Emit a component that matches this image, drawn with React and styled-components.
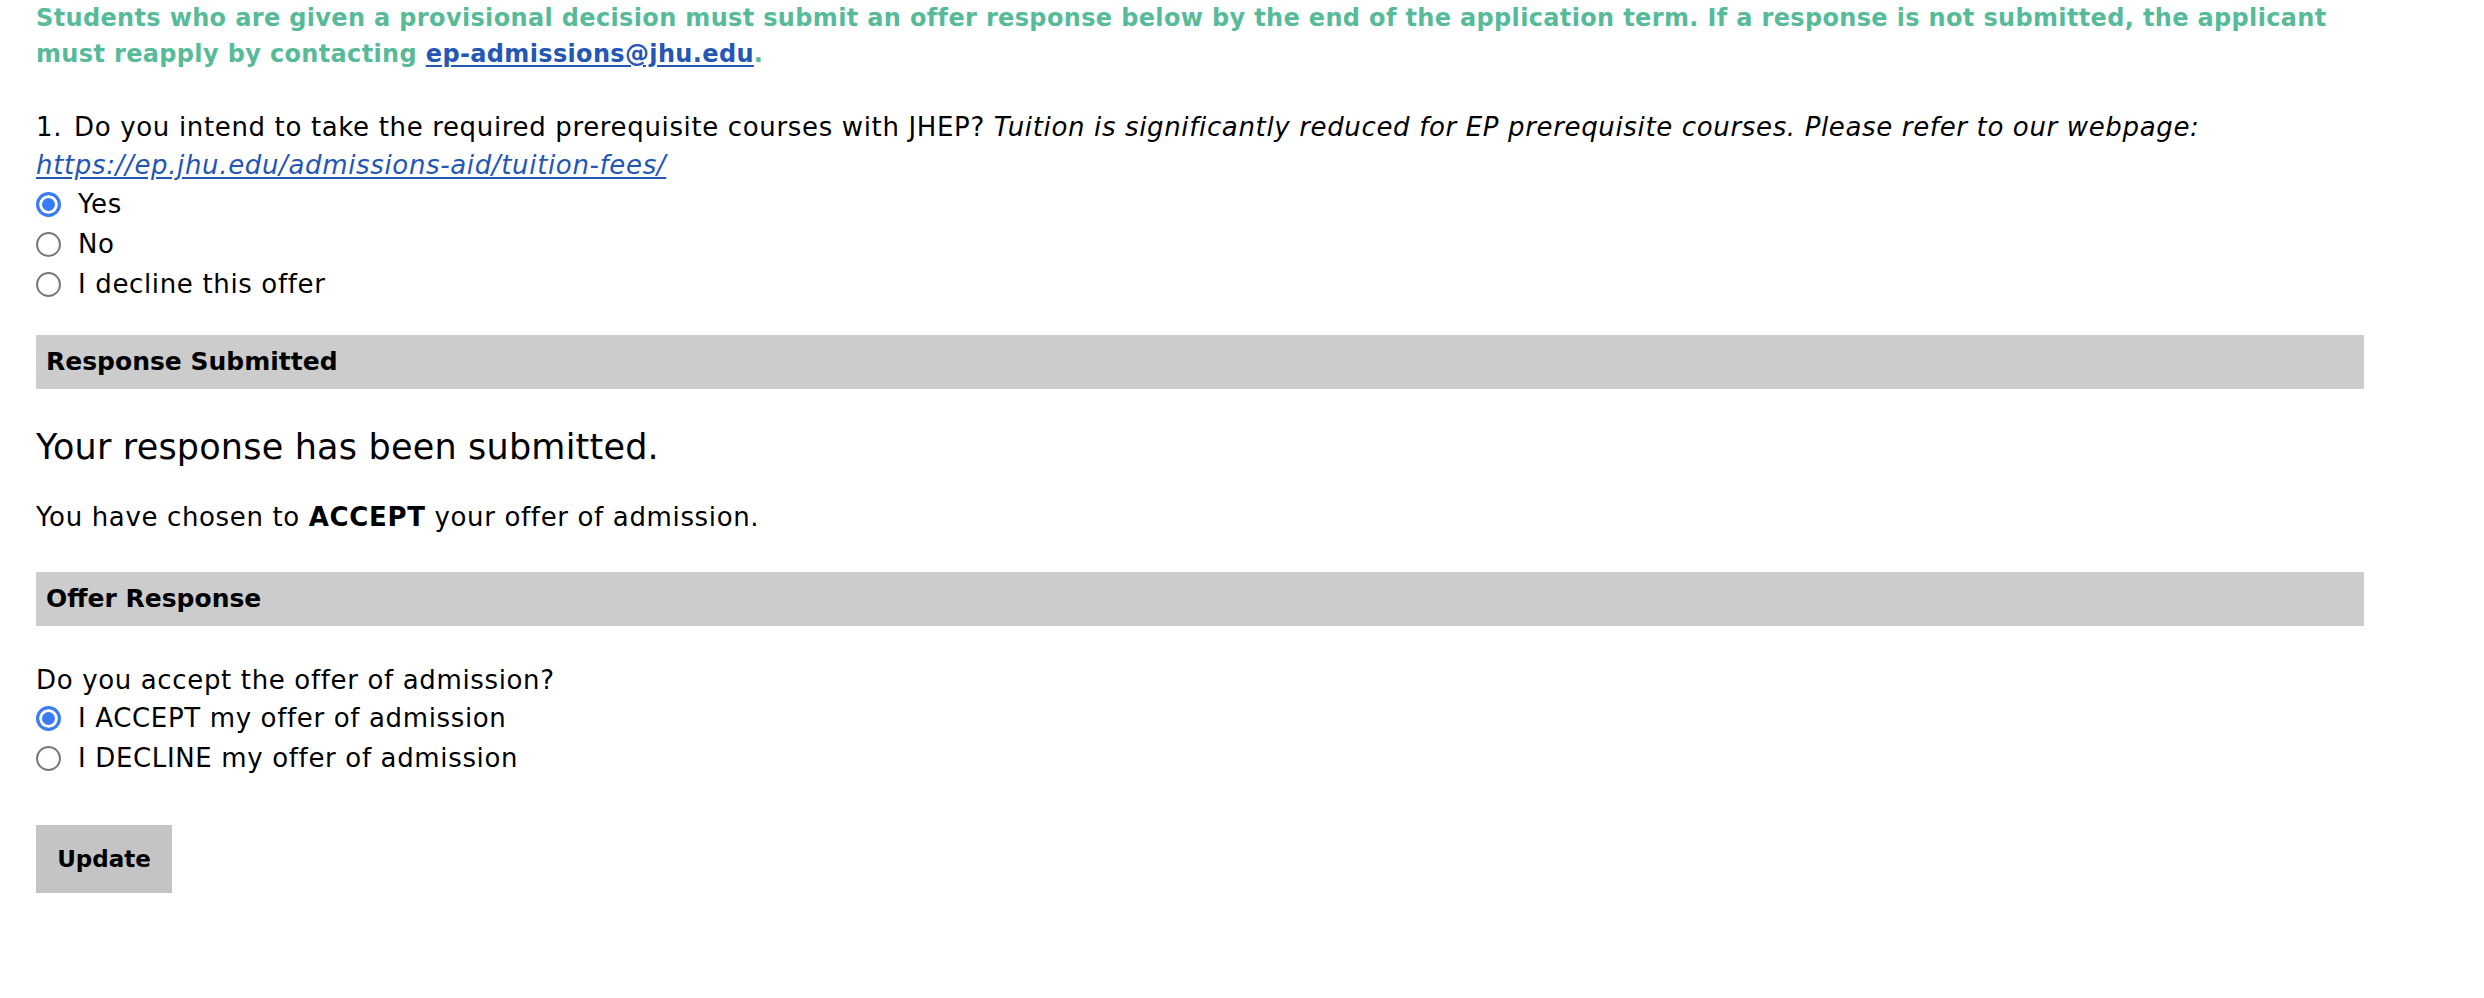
import React from "react";
import styled, { createGlobalStyle } from "styled-components";

const GlobalStyle = createGlobalStyle`
  html, body {
    margin: 0;
    padding: 0;
    background: #ffffff;
  }
  body {
    font-family: "DejaVu Sans", Inter, sans-serif;
    color: #000000;
  }
`;

const Page = styled.main`
  width: 2328px;
  padding: 0 0 0 36px;
  font-size: 26px;
  line-height: 36px;
  letter-spacing: 0.65px;
`;

const Notice = styled.p`
  margin: 0;
  color: #57bb99;
  font-weight: 700;
  font-size: 24px;
  line-height: 36px;
  letter-spacing: 0.35px;
`;

const Link = styled.a`
  color: #2456b4;
  text-decoration: underline;
  text-underline-offset: 3px;
  white-space: nowrap;
`;

const Question = styled.p`
  margin: 36px 0 0;
  font-size: 26px;
  line-height: 38px;
`;

const Num = styled.span`
  margin-right: 12px;
`;

const RadioGroup = styled.div`
  display: flex;
  flex-direction: column;
`;

const RadioRow = styled.label`
  display: flex;
  align-items: center;
  gap: 17px;
  height: 40px;
  font-size: 26px;
`;

const Radio = styled.input.attrs({ type: "radio" })`
  appearance: none;
  -webkit-appearance: none;
  margin: 0;
  width: 25px;
  height: 25px;
  border-radius: 50%;
  box-sizing: border-box;
  border: 2px solid #7a7a7a;
  background: #ffffff;
  flex: none;
  &:checked {
    border: 3px solid #3b7cf5;
    background: #3b7cf5;
    box-shadow: inset 0 0 0 3px #ffffff;
  }
`;

const SectionBar = styled.h2`
  margin: ${(p) => p.$top}px 0 0;
  height: 54px;
  box-sizing: border-box;
  background: #cccccc;
  padding: 0 10px;
  display: flex;
  align-items: center;
  font-size: 25px;
  font-weight: 700;
  letter-spacing: 0;
`;

const BigMessage = styled.p`
  margin: 36px 0 0;
  font-size: 35px;
  line-height: 44px;
  letter-spacing: 0.2px;
`;

const Text = styled.p`
  margin: ${(p) => p.$top || 0}px 0 0;
  font-size: 26px;
  line-height: 36px;
`;

const Button = styled.button`
  margin-top: 47px;
  width: 136px;
  height: 68px;
  border: none;
  background: #c4c4c4;
  font-family: inherit;
  font-size: 23px;
  font-weight: 700;
  letter-spacing: 0;
  color: #000000;
  cursor: pointer;
`;

export default function App() {
  return (
    <>
      <GlobalStyle />
      <Page>
        <Notice>
          Students who are given a provisional decision must submit an offer response below by the end of
          the application term. If a response is not submitted, the applicant must reapply by contacting{" "}
          <Link href="#">ep-admissions@jhu.edu</Link>.
        </Notice>
        <Question>
          <Num>1.</Num>Do you intend to take the required prerequisite courses with JHEP?{" "}
          <em>
            Tuition is significantly reduced for EP prerequisite courses. Please refer to our webpage:{" "}
            <Link href="#">https://ep.jhu.edu/admissions-aid/tuition-fees/</Link>
          </em>
        </Question>
        <RadioGroup>
          <RadioRow>
            <Radio name="q1" defaultChecked />
            Yes
          </RadioRow>
          <RadioRow>
            <Radio name="q1" />
            No
          </RadioRow>
          <RadioRow>
            <Radio name="q1" />
            I decline this offer
          </RadioRow>
        </RadioGroup>
        <SectionBar $top={31}>Response Submitted</SectionBar>
        <BigMessage>Your response has been submitted.</BigMessage>
        <Text $top={30}>
          You have chosen to <strong>ACCEPT</strong> your offer of admission.
        </Text>
        <SectionBar $top={37}>Offer Response</SectionBar>
        <Text $top={36}>Do you accept the offer of admission?</Text>
        <RadioGroup>
          <RadioRow>
            <Radio name="offer" defaultChecked />
            I ACCEPT my offer of admission
          </RadioRow>
          <RadioRow>
            <Radio name="offer" />
            I DECLINE my offer of admission
          </RadioRow>
        </RadioGroup>
        <Button type="button">Update</Button>
      </Page>
    </>
  );
}
